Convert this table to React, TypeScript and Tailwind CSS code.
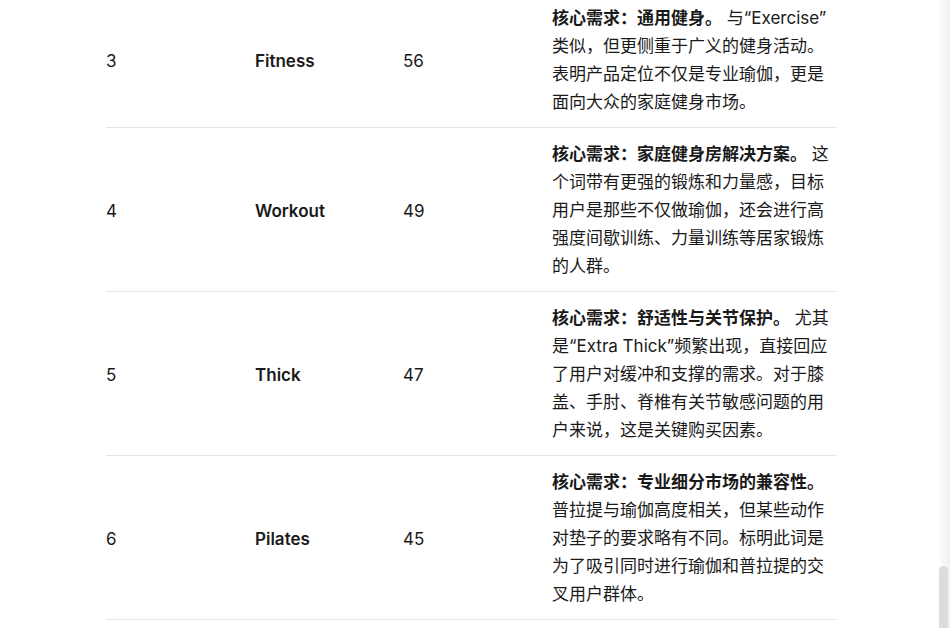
import React from "react";

const rows = [
  {
    n: "3",
    k: "Fitness",
    c: "56",
    b: "核心需求：通用健身。",
    t: " 与“Exercise”\u200B类似，但更侧重于广义的健身活动。表明产品定位不仅是专业瑜伽，更是面向大众的家庭健身市场。",
  },
  {
    n: "4",
    k: "Workout",
    c: "49",
    b: "核心需求：家庭健身房解决方案。",
    t: " 这个词带有更强的锻炼和力量感，目标用户是那些不仅做瑜伽，还会进行高强度间歇训练、力量训练等居家锻炼的人群。",
  },
  {
    n: "5",
    k: "Thick",
    c: "47",
    b: "核心需求：舒适性与关节保护。",
    t: " 尤其是“Extra Thick”频繁出现，直接回应了用户对缓冲和支撑的需求。对于膝盖、手肘、脊椎有关节敏感问题的用户来说，这是关键购买因素。",
  },
  {
    n: "6",
    k: "Pilates",
    c: "45",
    b: "核心需求：专业细分市场的兼容性。",
    t: "普拉提与瑜伽高度相关，但某些动作对垫子的要求略有不同。标明此词是为了吸引同时进行瑜伽和普拉提的交叉用户群体。",
  },
];

export default function App() {
  return (
    <div
      className="relative h-[628px] w-[950px] overflow-hidden bg-white text-[17px] leading-7 text-[#1a1a1a]"
      style={{ fontFamily: 'Inter, "Noto Sans CJK SC", sans-serif' }}
    >
      <div className="ml-[106px] -mt-[8px] w-[731px]">
        {rows.map((r) => (
          <div
            key={r.n}
            className="grid grid-cols-[149px_148px_149px_1fr] items-center border-b border-[#e5e5e5]"
          >
            <div className="pt-[3px]">{r.n}</div>
            <div className="pt-[3px] font-semibold">{r.k}</div>
            <div className="pt-[3px]">{r.c}</div>
            <div className="w-[280px] pt-3 pb-[11px]">
              <span className="font-bold">{r.b}</span>
              {r.t}
            </div>
          </div>
        ))}
      </div>
      <div className="absolute right-0 top-0 h-full w-[12px] bg-gradient-to-r from-white to-[#efefef]" />
      <div className="absolute right-[2px] top-[566px] h-[80px] w-[9px] rounded-full bg-[#dcdcdc]" />
    </div>
  );
}
